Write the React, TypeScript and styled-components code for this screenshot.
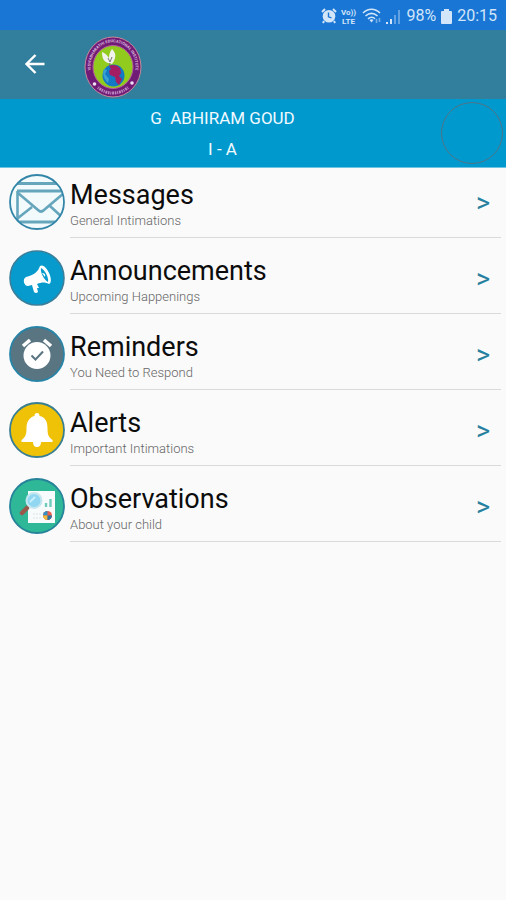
import React from "react";
import styled, { createGlobalStyle } from "styled-components";

const GlobalStyle = createGlobalStyle`
  * { box-sizing: border-box; }
  body {
    margin: 0;
    background: #fafafa;
    font-family: Roboto, "Liberation Sans", sans-serif;
  }
`;

const Screen = styled.div`
  min-height: 100vh;
  background: #fafafa;
`;

const StatusBar = styled.div`
  display: flex;
  align-items: center;
  justify-content: flex-end;
  gap: 5px;
  height: 30px;
  padding: 2px 9px 0 0;
  background: #1976d5;
  color: #d3e5f8;
  font-size: 16px;
  line-height: 20px;

  svg { display: block; flex: none; }
`;

const StatusText = styled.span`
  white-space: nowrap;
`;

const StatusIcons = styled.span`
  display: flex;
  align-items: center;
  gap: 4px;
`;

const Toolbar = styled.header`
  display: flex;
  align-items: center;
  gap: 35px;
  height: 69px;
  padding: 5px 20px 0;
  background: #317f9d;
`;

const BackButton = styled.button`
  display: flex;
  padding: 0 0 6px;
  border: 0;
  background: none;
  color: #fff;
  cursor: pointer;
`;

const Profile = styled.section`
  display: flex;
  align-items: center;
  height: 69px;
  padding-right: 3px;
  background: #0099ce;
  border-bottom: 1px solid #6fc4e4;
`;

const Student = styled.div`
  flex: 1;
  display: flex;
  flex-direction: column;
  gap: 10px;
  padding: 2px 0 0 4px;
  color: #f0faff;
  font-size: 17px;
  line-height: 21px;
  text-align: center;
  white-space: pre;
`;

const Avatar = styled.div`
  flex: none;
  width: 62px;
  height: 62px;
  border: 1px solid #4f7486;
  border-radius: 50%;
`;

const Menu = styled.nav`
  display: flex;
  flex-direction: column;
  gap: 6px;
`;

const Row = styled.a`
  display: flex;
  height: 70px;
  padding: 0 5px 0 9px;
  gap: 5px;
  color: #0c0c0c;
  text-decoration: none;
`;

const IconSlot = styled.span`
  flex: none;
  width: 56px;
  padding-top: 6px;

  svg { display: block; }
`;

const RowBody = styled.span`
  flex: 1;
  display: flex;
  align-items: center;
  justify-content: space-between;
  padding-right: 11px;
  border-bottom: 1px solid #dadada;
`;

const Labels = styled.span`
  display: flex;
  flex-direction: column;
`;

const Title = styled.span`
  font-size: 27px;
  line-height: 36px;
`;

const Subtitle = styled.span`
  color: #666;
  font-size: 13px;
  font-weight: 300;
  line-height: 16px;
`;

const Chevron = styled.span`
  color: #26809f;
  font-size: 27px;
  line-height: 28px;
`;

const AlarmStatusIcon = () => (
  <svg width="16" height="16" viewBox="0 0 16 16" fill="none" stroke="currentColor">
    <path d="M1 4 4 1M15 4l-3-3M3 13l-1 2M13 13l1 2" strokeWidth="2" />
    <circle cx="8" cy="8.3" r="6.3" fill="currentColor" stroke="none" />
    <path d="M7.5 4.5v4.3l3 1" stroke="#1976d5" strokeWidth="1.4" />
  </svg>
);

const VolteIcon = () => (
  <svg width="17" height="17" viewBox="0 0 17 17" fill="currentColor" fontFamily="Roboto" fontWeight="700">
    <text x="0" y="7" fontSize="8">Vo))</text>
    <text x="1" y="16" fontSize="8">LTE</text>
  </svg>
);

const WifiIcon = () => (
  <svg width="20" height="16" viewBox="0 0 20 16" fill="none" stroke="currentColor" strokeWidth="1.6">
    <path d="M1 5c5-5 12-5 17 0M3.5 8c4-3.500 8-3.500 12 0M6 10.800c2.500-2 5-2 7 0" />
    <path d="m7.500 12 2 2.500 2-2.500c-1.200-1-2.800-1-4 0Z" fill="currentColor" stroke="none" />
    <path d="M14.500 11v4M17.500 10v4" opacity=".5" />
  </svg>
);

const SignalIcon = () => (
  <svg width="15" height="15" viewBox="0 0 15 15" fill="currentColor">
    <path d="M0 13h2v2H0zM4 10h2v5H4z" />
    <path d="M8 6h2v9H8zM12 1h2v14h-2z" opacity=".4" />
  </svg>
);

const BatteryIcon = () => (
  <svg width="11" height="15" viewBox="0 0 11 15" fill="currentColor">
    <path d="M3 0h5v2h2q1 0 1 1v11q0 1-1 1H1q-1 0-1-1V3q0-1 1-1h2z" />
  </svg>
);

const BackIcon = () => (
  <svg width="29" height="24" viewBox="0 0 29 24" fill="none" stroke="currentColor" strokeWidth="2.400">
    <path d="M24.500 12H7M15.500 3 6.500 12l9 9" />
  </svg>
);

const SchoolLogo = () => (
  <svg width="58" height="62" viewBox="0 0 58 62" role="img" aria-label="School crest">
    <defs>
      <path id="ring-top" d="M9.500 43a22.500 24.500 0 1 1 39 0" />
    </defs>
    <ellipse cx="29" cy="31" rx="28" ry="30" fill="#701b76" stroke="#c48b9c" strokeWidth="1" />
    <ellipse cx="29" cy="31" rx="20" ry="21.500" fill="#91cb1d" stroke="#b8609b" strokeWidth="1" />
    <text fill="#d9b7dc" fontFamily="Roboto" fontWeight="700" fontSize="4">
      <textPath href="#ring-top" startOffset="50%" textAnchor="middle">VISWABHARATHI EDUCATIONAL INSTITUTE</textPath>
    </text>
    <path d="M14 51.500a24 25.500 0 0 0 30 0" fill="none" stroke="#cfa3d3" strokeWidth="3" strokeDasharray="1 .8 2 .7 1.500 .8" opacity=".8" />
    <circle cx="10.500" cy="48" r="1.800" fill="#f3dff5" />
    <circle cx="48" cy="47" r="1.800" fill="#f3dff5" />
    <circle cx="29.500" cy="39.500" r="11" fill="#1479c4" />
    <path d="M25 30c4-2 8-1 11 2l1 5-2 3 3 3-3 6-3-3-1-5-5-2-1-4 2-2z" fill="#a41d62" />
    <path d="m20 33 3 1-2 4 4 5-1 4c-4-4-6-9-4-14z" fill="#39a0d2" />
    <path d="M18 16c0 5 1 9 6 11l4 1 2-3 1-3c1-3 0-6-3-9-2 3-3 5-3 9-2-3-4-5-7-6z" fill="#f2f2ed" />
    <path d="m24 22 2 4 2-5M26 27l-1 3" stroke="#777" fill="none" />
  </svg>
);

const MessagesIcon = () => (
  <svg width="56" height="56" viewBox="0 0 56 56" fill="none" stroke="#65a6bd" strokeWidth="2.600">
    <defs><clipPath id="mail-disc"><circle cx="28" cy="28" r="27" /></clipPath></defs>
    <circle cx="28" cy="28" r="27" fill="#f3fafc" stroke="none" />
    <g clipPath="url(#mail-disc)">
      <path d="M8 9.500h42M8 17h46M8 48h42" strokeWidth="3" />
      <path d="M8.500 17v31M9 19l20 17q3 3 6 0l20-17M9 44l14-11M54 44 41 32" />
    </g>
    <circle cx="28" cy="28" r="27" stroke="#3386a8" strokeWidth="1.800" />
  </svg>
);

const AnnouncementsIcon = () => (
  <svg width="56" height="56" viewBox="0 0 56 56">
    <circle cx="28" cy="28" r="27" fill="#079bcd" stroke="#397f9b" strokeWidth="1.600" />
    <path d="M31 16c-2 6-6 9-14 11-4 2-2 9 2 9l4-1 2 7q2 2 4 0l-1-4h2l-2-4c5-2 8-2 12 0 6-2-3-22-9-18z" fill="#fff" />
    <path d="M32 18c4 2 8 10 7 14-4-2-8-10-7-14z" fill="#079bcd" />
    <path d="M33 23q4 0 3 4z" fill="#fff" />
  </svg>
);

const RemindersIcon = () => (
  <svg width="56" height="56" viewBox="0 0 56 56" fill="none">
    <circle cx="28" cy="28" r="27" fill="#5a7582" stroke="#2784a7" strokeWidth="1.800" />
    <circle cx="28" cy="29.500" r="13.500" fill="#fff" />
    <path d="m14 20 7-6M35 14l7 6" stroke="#fff" strokeWidth="3.600" />
    <path d="m22.500 29.500 4 4 7.500-8" stroke="#5a7582" strokeWidth="2" />
  </svg>
);

const AlertsIcon = () => (
  <svg width="56" height="56" viewBox="0 0 56 56">
    <circle cx="28" cy="28" r="27" fill="#efc208" stroke="#397f91" strokeWidth="1.800" />
    <path d="M28 11q2.500 0 2.500 3c6 1 8 6 8 12 0 7 1 9 5 12v2H32q0 5-4 5t-4-5H12.500v-2c4-3 5-5 5-12 0-6 3-11 8-12q0-3 2.500-3z" fill="#fff" />
  </svg>
);

const ObservationsIcon = () => (
  <svg width="56" height="56" viewBox="0 0 56 56" fill="none">
    <circle cx="28" cy="28" r="27" fill="#2eb898" stroke="#26839a" strokeWidth="1.800" />
    <path d="M19 13h27v32H19z" fill="#f8fbfb" />
    <path d="M37 29v-4M41.500 29v-8" stroke="#70cbbb" strokeWidth="2.400" />
    <path d="M24 36h8M24 40h8" stroke="#dce4e6" strokeDasharray="2 1" />
    <circle cx="38.500" cy="37.500" r="4.500" fill="#e8604c" />
    <path d="M38.500 37.500V33a4.500 4.500 0 0 0-4.500 4.500z" fill="#348fc4" />
    <path d="M38.500 37.500H34a4.500 4.500 0 0 0 4.500 4.500z" fill="#f1ba3d" />
    <path d="M38.500 37.500V42a4.500 4.500 0 0 0 4.500-4.500z" fill="#2874a2" />
    <path d="m18 30-5 5" stroke="#96594a" strokeWidth="4.500" strokeLinecap="round" />
    <circle cx="25" cy="22.500" r="7.500" fill="#92d7f2" stroke="#c4e7ef" strokeWidth="2" />
    <path d="m21 24 5-5" stroke="#c8effc" strokeWidth="2" />
  </svg>
);

const items = [
  { title: "Messages", subtitle: "General Intimations", Icon: MessagesIcon },
  { title: "Announcements", subtitle: "Upcoming Happenings", Icon: AnnouncementsIcon },
  { title: "Reminders", subtitle: "You Need to Respond", Icon: RemindersIcon },
  { title: "Alerts", subtitle: "Important Intimations", Icon: AlertsIcon },
  { title: "Observations", subtitle: "About your child", Icon: ObservationsIcon },
];

export default function App() {
  return (
    <>
      <GlobalStyle />
      <Screen>
        <StatusBar>
          <StatusIcons>
            <AlarmStatusIcon />
            <VolteIcon />
            <WifiIcon />
            <SignalIcon />
          </StatusIcons>
          <StatusText>98%</StatusText>
          <BatteryIcon />
          <StatusText>20:15</StatusText>
        </StatusBar>
        <Toolbar>
          <BackButton type="button" aria-label="Back"><BackIcon /></BackButton>
          <SchoolLogo />
        </Toolbar>
        <Profile>
          <Student>
            <span>G  ABHIRAM GOUD</span>
            <span>I - A</span>
          </Student>
          <Avatar />
        </Profile>
        <Menu>
          {items.map(({ title, subtitle, Icon }) => (
            <Row href="#" key={title}>
              <IconSlot><Icon /></IconSlot>
              <RowBody>
                <Labels>
                  <Title>{title}</Title>
                  <Subtitle>{subtitle}</Subtitle>
                </Labels>
                <Chevron aria-hidden="true">&gt;</Chevron>
              </RowBody>
            </Row>
          ))}
        </Menu>
      </Screen>
    </>
  );
}
